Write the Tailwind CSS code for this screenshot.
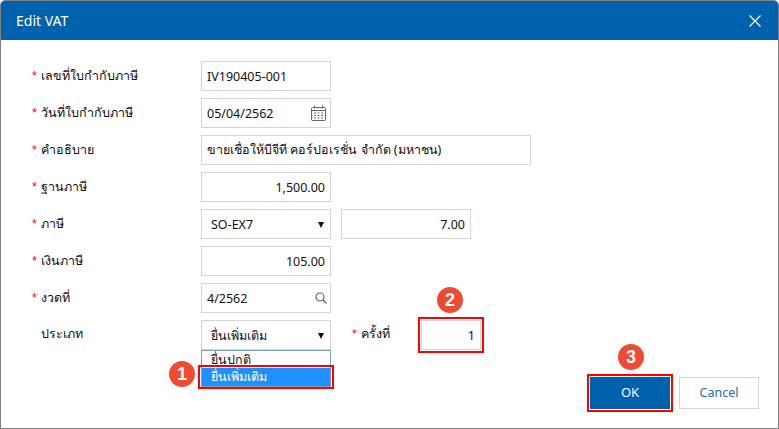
<!DOCTYPE html>
<html lang="en">
<head>
  <meta charset="UTF-8" />
  <title>Edit VAT</title>
  <script src="https://cdn.jsdelivr.net/npm/@tailwindcss/browser@4"></script>
</head>
<body class="bg-white font-['Tahoma','Noto_Sans','DejaVu_Sans',sans-serif] text-[12.5px] text-[#111]">
  <div class="relative w-[779px] h-[429px] border border-[#808080] rounded-t-[5px] overflow-hidden bg-white">
    <!-- header -->
    <div class="h-[39px] bg-[#0061ad] flex items-center justify-between pl-[15px] pr-[17px] text-white">
      <span class="text-[14px]">Edit VAT</span>
      <svg width="12" height="12" viewBox="0 0 12 12" fill="none" stroke="white" stroke-width="1.2"><path d="M0.5 0.5l11 11M11.500 0.5l-11 11" /></svg>
    </div>

    <!-- form -->
    <div class="pt-[21px] flex flex-col gap-[7px]">
      <div class="flex h-[30px]">
        <label class="w-[200px] pl-[31px] pt-[6px]"><span class="inline-block w-[9px] text-[#f00] font-['Liberation_Sans',sans-serif]">*</span>เลขที่ใบกำกับภาษี</label>
        <div class="w-[130px] h-[30px] border border-[#d5d5d5] px-[5px] pt-[2px] flex items-center">IV190405-001</div>
      </div>
      <div class="flex h-[30px]">
        <label class="w-[200px] pl-[31px] pt-[6px]"><span class="inline-block w-[9px] text-[#f00] font-['Liberation_Sans',sans-serif]">*</span>วันที่ใบกำกับภาษี</label>
        <div class="w-[130px] h-[30px] border border-[#d5d5d5] pl-[5px] pr-[4px] pt-[2px] flex items-center justify-between">
          05/04/2562
          <svg class="-mt-[2px]" width="15" height="16" viewBox="0 0 15 16" fill="none" stroke="#666" stroke-width="1"><rect x="0.5" y="2.5" width="14" height="13" rx="1" /><path d="M0.5 5.5h14M3.5 0.5v3M11.5 0.5v3M3 8h2M6.5 8h2M10 8h2M3 10.500h2M6.500 10.500h2M10 10.500h2M3 13h2M6.500 13h2M10 13h2" /></svg>
        </div>
      </div>
      <div class="flex h-[30px]">
        <label class="w-[200px] pl-[31px] pt-[6px]"><span class="inline-block w-[9px] text-[#f00] font-['Liberation_Sans',sans-serif]">*</span>คำอธิบาย</label>
        <div class="w-[330px] h-[30px] border border-[#d5d5d5] px-[5px] flex items-center">ขายเชื่อให้บีจีที คอร์ปอเรชั่น จำกัด (มหาชน)</div>
      </div>
      <div class="flex h-[30px]">
        <label class="w-[200px] pl-[31px] pt-[6px]"><span class="inline-block w-[9px] text-[#f00] font-['Liberation_Sans',sans-serif]">*</span>ฐานภาษี</label>
        <div class="w-[130px] h-[30px] border border-[#d5d5d5] px-[5px] pt-[2px] flex items-center justify-end">1,500.00</div>
      </div>
      <div class="flex h-[30px]">
        <label class="w-[200px] pl-[31px] pt-[6px]"><span class="inline-block w-[9px] text-[#f00] font-['Liberation_Sans',sans-serif]">*</span>ภาษี</label>
        <div class="w-[130px] h-[30px] border border-[#d5d5d5] pl-[9px] pr-[6px] pt-[2px] flex items-center justify-between">SO-EX7
          <svg width="6" height="6" viewBox="0 0 6 6" fill="#111"><path d="M0 0h6L3 6z" /></svg>
        </div>
        <div class="ml-[10px] w-[130px] h-[30px] border border-[#d5d5d5] px-[5px] pt-[2px] flex items-center justify-end">7.00</div>
      </div>
      <div class="flex h-[30px]">
        <label class="w-[200px] pl-[31px] pt-[6px]"><span class="inline-block w-[9px] text-[#f00] font-['Liberation_Sans',sans-serif]">*</span>เงินภาษี</label>
        <div class="w-[130px] h-[30px] border border-[#d5d5d5] px-[5px] pt-[2px] flex items-center justify-end">105.00</div>
      </div>
      <div class="flex h-[30px]">
        <label class="w-[200px] pl-[31px] pt-[6px]"><span class="inline-block w-[9px] text-[#f00] font-['Liberation_Sans',sans-serif]">*</span>งวดที่</label>
        <div class="w-[130px] h-[30px] border border-[#d5d5d5] pl-[5px] pr-[3px] pt-[2px] flex items-center justify-between">
          4/2562
          <svg class="-mt-[2px]" width="12" height="12" viewBox="0 0 12 12" fill="none" stroke="#666" stroke-width="1.2"><circle cx="5" cy="5" r="4" /><path d="M8 8l3.500 3.500" /></svg>
        </div>
      </div>
      <div class="flex h-[30px]">
        <label class="w-[200px] pl-[40px] pt-[5px]">ประเภท</label>
        <div class="w-[130px] h-[30px] border border-[#d5d5d5] pl-[9px] pr-[6px] pt-[2px] flex items-center justify-between">ยื่นเพิ่มเติม
          <svg width="6" height="6" viewBox="0 0 6 6" fill="#111"><path d="M0 0h6L3 6z" /></svg>
        </div>
        <label class="ml-[21px] w-[69px] pt-[5px]"><span class="inline-block w-[9px] text-[#f00] font-['Liberation_Sans',sans-serif]">*</span>ครั้งที่</label>
        <div class="w-[60px] h-[30px] border border-[#d5d5d5] px-[5px] pt-[2px] flex items-center justify-end outline-2 outline-offset-1 outline-[#f00]">1</div>
      </div>
    </div>

    <!-- footer buttons -->
    <div class="absolute right-[19px] bottom-[19px] flex gap-[9px]">
      <button class="w-[80px] h-[32px] bg-[#0061ad] text-white text-[13px] outline-2 outline-offset-1 outline-[#f00]">OK</button>
      <button class="w-[80px] h-[32px] border border-[#d5d5d5] text-[#2a6ab0]">Cancel</button>
    </div>

    <!-- open dropdown -->
    <div class="absolute left-[200px] top-[349px] w-[130px] h-[37px] border border-[#7f9db9] leading-[17px] bg-white">
      <div class="pl-[9px] h-[17px]">ยื่นปกติ</div>
      <div class="pl-[9px] h-[18px] bg-[#1e90ff] text-white">ยื่นเพิ่มเติม</div>
    </div>
    <div class="absolute left-[197px] top-[364px] w-[136px] h-[24px] border-2 border-[#f00]"></div>

    <!-- step badges -->
    <div class="absolute left-[168px] top-[360px] w-[26px] h-[26px] rounded-full bg-[#f04a30] text-white font-bold text-[18px] flex items-center justify-center font-['Liberation_Sans',sans-serif]">1</div>
    <div class="absolute left-[436px] top-[286px] w-[26px] h-[26px] rounded-full bg-[#f04a30] text-white font-bold text-[18px] flex items-center justify-center font-['Liberation_Sans',sans-serif]">2</div>
    <div class="absolute left-[617px] top-[343px] w-[26px] h-[26px] rounded-full bg-[#f04a30] text-white font-bold text-[18px] flex items-center justify-center font-['Liberation_Sans',sans-serif]">3</div>
  </div>
</body>
</html>
